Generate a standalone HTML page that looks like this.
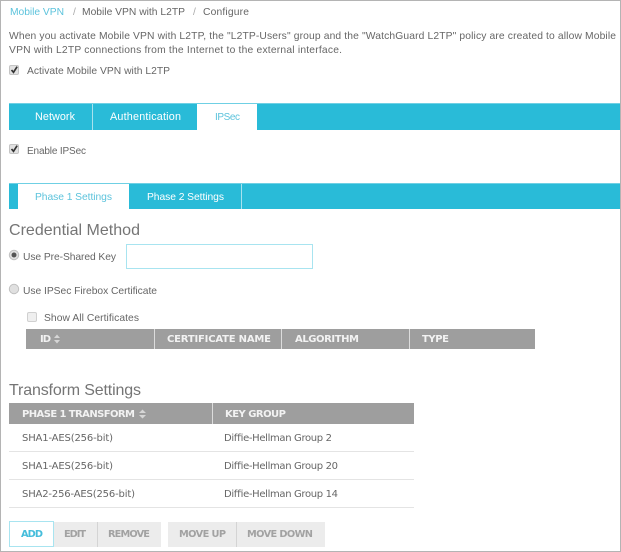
<!DOCTYPE html>
<html><head><meta charset="utf-8">
<style>
html,body{margin:0;padding:0;background:#fff;width:621px;height:552px;overflow:hidden}
svg{display:block;filter:blur(0.3px)}
text{font-family:"Liberation Sans",sans-serif;font-size:10.3px;fill:#666;white-space:pre}
.th{font-family:"DejaVu Sans",sans-serif;font-weight:bold;font-size:10px;fill:#f2f2f2}
.td{font-family:"DejaVu Sans",sans-serif;font-size:10px;fill:#666}
.btn{font-family:"DejaVu Sans",sans-serif;font-weight:bold;font-size:9.8px;fill:#a2a2a2}
.h{font-size:16px;fill:#757575}
.tab{fill:#fff;font-size:10.8px}
.cy{fill:#5cc3dc}
</style></head>
<body>
<svg width="621" height="552" viewBox="0 0 621 552" xmlns="http://www.w3.org/2000/svg">
<rect width="621" height="552" fill="#fff"/>
<!-- outer border -->
<rect x="0.5" y="0.5" width="620" height="551" fill="none" stroke="#b4b4b4"/>

<!-- breadcrumb -->
<text class="cy" x="10" y="15" textLength="54">Mobile VPN</text>
<text x="73" y="15" style="fill:#aaa">/</text>
<text x="82" y="15" textLength="103">Mobile VPN with L2TP</text>
<text x="193" y="15" style="fill:#aaa">/</text>
<text x="203" y="15" textLength="46">Configure</text>

<!-- intro -->
<text x="9" y="39" textLength="607">When you activate Mobile VPN with L2TP, the "L2TP-Users" group and the "WatchGuard L2TP" policy are created to allow Mobile</text>
<text x="9" y="53" textLength="333">VPN with L2TP connections from the Internet to the external interface.</text>

<!-- activate checkbox -->
<rect x="9.5" y="65.5" width="9" height="9" rx="1.5" fill="#e2e2e2" stroke="#c4c4c4"/>
<path d="M11.500 70l2 2.300 3.600-5.600" fill="none" stroke="#333" stroke-width="1.700"/>
<text x="27" y="74" textLength="143">Activate Mobile VPN with L2TP</text>

<!-- main tabs -->
<rect x="9" y="103" width="611" height="27" fill="#29bbd8"/>
<rect x="9" y="103" width="611" height="1" fill="#6fd0e4"/>
<rect x="92" y="104" width="1" height="26" fill="#a8e2ee"/>
<rect x="197" y="104" width="60" height="26" fill="#fff"/>
<text class="tab" x="35" y="120" textLength="40">Network</text>
<text class="tab" x="110" y="120" textLength="71">Authentication</text>
<text class="cy" x="215" y="120" textLength="25" style="font-size:10px">IPSec</text>

<!-- enable ipsec -->
<rect x="9.5" y="144.5" width="9" height="9" rx="1.5" fill="#e2e2e2" stroke="#c4c4c4"/>
<path d="M11.500 149l2 2.300 3.600-5.600" fill="none" stroke="#333" stroke-width="1.700"/>
<text x="27" y="154" textLength="59" style="font-size:10px">Enable IPSec</text>

<!-- sub tabs -->
<rect x="9" y="183" width="611" height="26" fill="#29bbd8"/>
<rect x="9" y="183" width="611" height="1" fill="#6fd0e4"/>
<rect x="18" y="184" width="111" height="25" fill="#fff"/>
<rect x="241" y="184" width="1" height="25" fill="#a8e2ee"/>
<text class="cy" x="35" y="200" textLength="77">Phase 1 Settings</text>
<text class="tab" x="147" y="200" textLength="77" style="font-size:10.3px">Phase 2 Settings</text>

<!-- credential method -->
<text class="h" x="9" y="235" textLength="131">Credential Method</text>
<circle cx="14" cy="255" r="4.700" fill="#e0e0e0" stroke="#c0c0c0"/>
<circle cx="14" cy="255" r="2.500" fill="#555"/>
<text x="23" y="260" textLength="93">Use Pre-Shared Key</text>
<rect x="126.500" y="244.500" width="186" height="24" fill="#fff" stroke="#a8e4f0"/>
<circle cx="14" cy="289" r="4.700" fill="#e0e0e0" stroke="#c0c0c0"/>
<text x="23" y="294" textLength="134">Use IPSec Firebox Certificate</text>
<rect x="27.500" y="312.500" width="9" height="9" rx="1.500" fill="#efefef" stroke="#d0d0d0"/>
<text x="44" y="321" textLength="95">Show All Certificates</text>

<!-- cert table -->
<rect x="26" y="329" width="509" height="20" fill="#9e9e9e"/>
<rect x="154" y="329" width="1" height="20" fill="#dcdcdc"/>
<rect x="281" y="329" width="1" height="20" fill="#dcdcdc"/>
<rect x="409" y="329" width="1" height="20" fill="#dcdcdc"/>
<text class="th" x="40" y="342" textLength="11">ID</text>
<path d="M54 338l3-3.500 3 3.500zM54 340l3 3.500 3-3.500z" fill="#d6d6d6"/>
<text class="th" x="167" y="342" textLength="104">CERTIFICATE NAME</text>
<text class="th" x="295" y="342" textLength="64">ALGORITHM</text>
<text class="th" x="422" y="342" textLength="27">TYPE</text>

<!-- transform settings -->
<text class="h" x="9" y="395" textLength="132">Transform Settings</text>
<rect x="9" y="403" width="405" height="21" fill="#9e9e9e"/>
<rect x="212" y="403" width="1" height="21" fill="#dcdcdc"/>
<text class="th" x="22" y="417" textLength="113">PHASE 1 TRANSFORM</text>
<path d="M139 413l3.500-3.500 3.500 3.500zM139 415l3.500 3.500 3.500-3.500z" fill="#d6d6d6"/>
<text class="th" x="225" y="417" textLength="61">KEY GROUP</text>

<text class="td" x="22" y="441" textLength="91">SHA1-AES(256-bit)</text>
<text class="td" x="224" y="441" textLength="108">Diffie-Hellman Group 2</text>
<rect x="9" y="451" width="405" height="1" fill="#e4e4e4"/>
<text class="td" x="22" y="469" textLength="91">SHA1-AES(256-bit)</text>
<text class="td" x="224" y="469" textLength="114">Diffie-Hellman Group 20</text>
<rect x="9" y="479" width="405" height="1" fill="#e4e4e4"/>
<text class="td" x="22" y="497" textLength="113">SHA2-256-AES(256-bit)</text>
<text class="td" x="224" y="497" textLength="114">Diffie-Hellman Group 14</text>
<rect x="9" y="507" width="405" height="1" fill="#e4e4e4"/>

<!-- buttons -->
<rect x="53" y="522" width="108" height="25" fill="#ececec"/>
<rect x="168" y="522" width="157" height="25" fill="#ececec"/>
<rect x="97" y="522" width="1" height="25" fill="#d4d4d4"/>
<rect x="236" y="522" width="1" height="25" fill="#d4d4d4"/>
<rect x="9.500" y="521.500" width="44" height="25" fill="#fff" stroke="#a8e4f0"/>
<text class="btn" x="21" y="537" textLength="22" style="fill:#45bddb">ADD</text>
<text class="btn" x="64" y="537" textLength="22">EDIT</text>
<text class="btn" x="108" y="537" textLength="42">REMOVE</text>
<text class="btn" x="179" y="537" textLength="47">MOVE UP</text>
<text class="btn" x="247" y="537" textLength="66">MOVE DOWN</text>
</svg>
</body></html>
